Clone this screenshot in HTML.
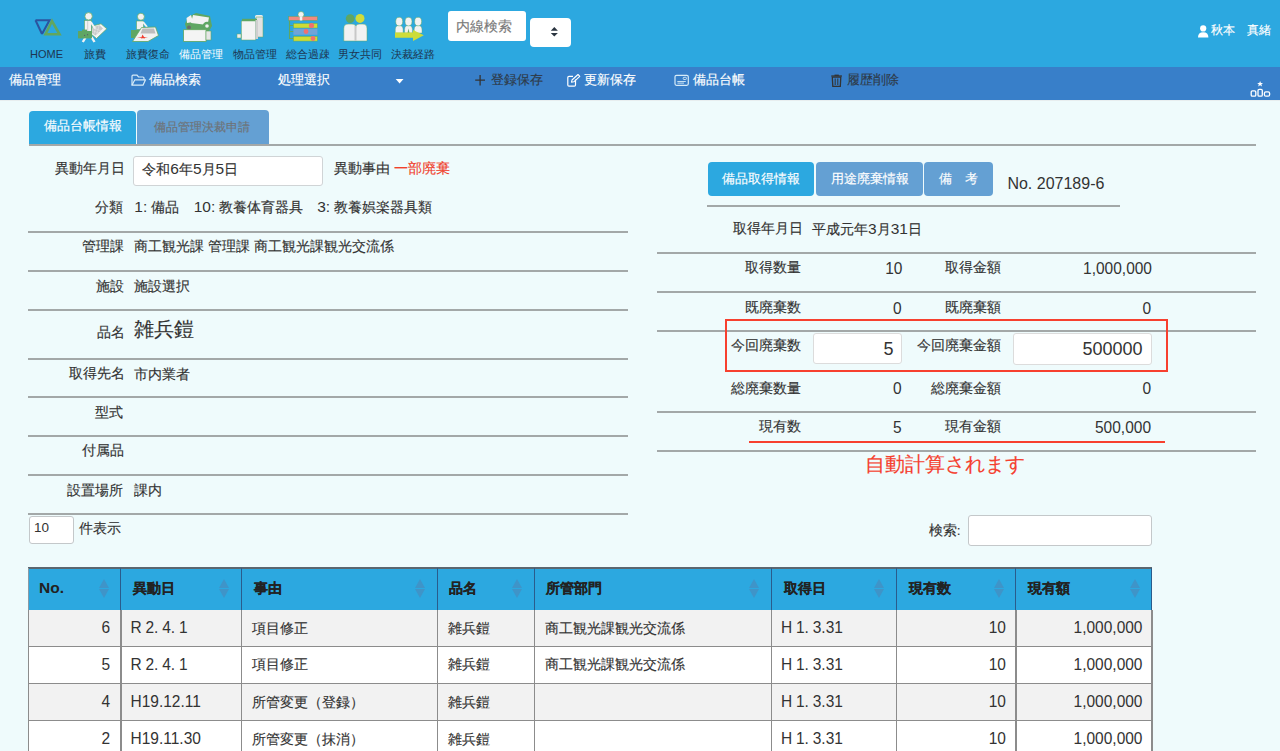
<!DOCTYPE html>
<html><head><meta charset="utf-8"><style>
*{margin:0;padding:0;box-sizing:border-box}
html,body{width:1280px;height:751px;overflow:hidden}
body{font-family:"Liberation Sans",sans-serif;background:#effbfc;color:#333;position:relative}
.a{position:absolute;white-space:nowrap}
.t{line-height:1}
.cj{-webkit-text-stroke:0.15px currentColor}
.cj .n{-webkit-text-stroke:0}
.n{font-size:1.107em}
#hdr{position:absolute;left:0;top:0;width:1280px;height:67px;background:#2ca8e0}
#nav{position:absolute;left:0;top:67px;width:1280px;height:33px;background:#387fc9}
.btn{position:absolute;border-radius:4px;color:#fff;font-size:12.5px;line-height:1;text-align:center}
.sort{width:11px;height:19px}
.sort:before,.sort:after{content:"";position:absolute;left:0;border-left:5.5px solid transparent;border-right:5.5px solid transparent}
.sort:before{top:0;border-bottom:9px solid #3f94c8}
.sort:after{top:10px;border-top:9px solid #3f94c8}
</style></head><body>
<div id="hdr"></div><div id="nav"></div><div class="a" style="left:0;top:100px;width:1280px;height:1px;background:#e8eeef"></div>
<div class="a" style="left:448px;top:11px;width:78px;height:30px;background:#fff;border-radius:3px"></div>
<div class="a" style="left:530px;top:17.5px;width:41px;height:29px;background:#fff;border-radius:4px"></div>
<svg class="a" style="left:0;top:0" width="480" height="50" viewBox="0 0 480 50">
<!-- HOME -->
<path d="M35.5 20.3 L49.5 20.3 L42 34" fill="none" stroke="#2b549f" stroke-width="2" stroke-linejoin="miter"/>
<path d="M35.5 20.3 L42 34" fill="none" stroke="#2b549f" stroke-width="2"/>
<path d="M52 21 L45.5 34.3 L59.5 34.3 Z" fill="none" stroke="#62a65e" stroke-width="2.6" stroke-linejoin="miter"/>
<!-- 旅費 -->
<path d="M92.5 26 L101 23.8 L106.8 28.8 L96.5 38.5 L91 34 Z" fill="#f4f4f4" stroke="#62a65e" stroke-width="0.7"/>
<path d="M93 27 L99.5 25.2 L103 28.5 L95.5 35.5 L92 33 Z" fill="#c9c9c9"/>
<path d="M94 28 L101 31 M93.5 31 L99.5 33.5 M96 26.5 L94 34 M99 26 L96.5 35" stroke="#e8e8e8" stroke-width="0.6"/>
<circle cx="88.6" cy="16.3" r="3.7" fill="#f2f2f2" stroke="#62a65e" stroke-width="0.7"/>
<rect x="84.5" y="20.5" width="6.8" height="11.5" fill="#f2f2f2" stroke="#62a65e" stroke-width="0.6"/>
<rect x="87.2" y="21" width="1" height="10" fill="#cfcfcf"/>
<path d="M90.8 22 L95 28.5" stroke="#f2f2f2" stroke-width="2"/>
<path d="M85.5 37.5 L82.8 42 M91.5 37 L94.5 42" stroke="#f2f2f2" stroke-width="2.4"/>
<rect x="78" y="31" width="14" height="7.4" fill="#5fa663"/>
<rect x="82" y="29.6" width="5" height="1.6" fill="#5fa663"/>
<circle cx="84.6" cy="35.4" r="0.6" fill="#5a5a6a"/><circle cx="87.6" cy="34.7" r="0.6" fill="#5a5a6a"/>
<!-- 旅費復命 -->
<circle cx="140.9" cy="16.7" r="3.5" fill="#f2f2f2" stroke="#62a65e" stroke-width="0.7"/>
<rect x="136.5" y="21" width="7" height="8.5" fill="#f2f2f2" stroke="#62a65e" stroke-width="0.6"/>
<path d="M143 22 L147 27" stroke="#f2f2f2" stroke-width="2"/>
<rect x="131" y="30" width="8" height="8" fill="#5fa663"/>
<path d="M141.5 27.5 L155.5 27 L158.5 35.5 L148 41.5 L132.5 41.5 Z" fill="#f2f2f2" stroke="#62a65e" stroke-width="0.8"/>
<path d="M142.5 28.5 L154 28.5 L155.5 33.5 L140.5 33.5 Z" fill="#bdbdbd"/>
<path d="M142.5 34.5 L145 38.5 L137 37 L148 37 L141 38.5 Z" fill="#f03c30"/>
<!-- 備品管理 -->
<path d="M188 17 L196 13 L210 16 L212 26 L209 31 L187 31 L185 24 Z" fill="#5fa663"/>
<path d="M193 15 L209 17.5 L207.5 25 L191 23 Z" fill="#f2f2f2"/>
<path d="M186.5 18 L191 15 L193 22 L187 23 Z" fill="#f2f2f2"/>
<circle cx="207" cy="26" r="4.2" fill="#5fa663"/><circle cx="207" cy="26" r="1.8" fill="#f2f2f2"/>
<circle cx="189" cy="27.5" r="2" fill="#6b6b6b"/>
<rect x="183.6" y="29.7" width="22.5" height="11.7" fill="#f4f4f4" stroke="#62a65e" stroke-width="0.8"/>
<rect x="206" y="31" width="5" height="9" fill="#e6e6e6" stroke="#62a65e" stroke-width="0.6"/>
<!-- 物品管理 -->
<rect x="255" y="15" width="8" height="3.5" rx="1.5" fill="#eeeeee"/>
<rect x="256" y="17" width="7" height="20" fill="#e2e2e2" stroke="#62a65e" stroke-width="0.5"/>
<rect x="242" y="18.8" width="15" height="2.4" fill="#5fa663"/>
<rect x="241.3" y="21" width="14.5" height="19" fill="#f4f4f4" stroke="#5fa663" stroke-width="0.5"/>
<rect x="255.5" y="20" width="2.5" height="19" fill="#cfcfcf"/>
<rect x="237" y="34" width="4" height="4" fill="#eeeeee" stroke="#5fa663" stroke-width="0.5"/>
<!-- 総合過疎 -->
<path d="M289.5 21 V39 M289.5 25.5 H293.5 M289.5 31.5 H293.5 M289.5 38.5 H293.5" stroke="#5fa663" stroke-width="1.1" fill="none"/>
<rect x="288.6" y="16.4" width="28.8" height="4" fill="#f08a80" stroke="#5fa663" stroke-width="0.5"/>
<circle cx="301" cy="14.5" r="3" fill="#f2f2f2" stroke="#5fa663" stroke-width="0.6"/>
<rect x="299.8" y="17" width="2.5" height="3.5" fill="#f2f2f2"/>
<rect x="293.4" y="23.4" width="24" height="4.6" fill="#cddc34" stroke="#5fa663" stroke-width="0.5"/>
<rect x="293.4" y="28.7" width="24" height="6.1" fill="#6fa4d8"/>
<rect x="293.4" y="36.3" width="24" height="4.8" fill="#cddc34" stroke="#5fa663" stroke-width="0.5"/>
<circle cx="311.5" cy="25.5" r="2.6" fill="#f07070"/>
<circle cx="306" cy="31.5" r="2.4" fill="#f07070"/>
<circle cx="313" cy="38.5" r="2.4" fill="#f07070"/>
<!-- 男女共同 -->
<path d="M343.8 41 V28.5 Q343.8 24.1 348 24.1 H352 Q356.2 24.1 356.2 28.5 V41 Z" fill="#f2f2f2" stroke="#5fa663" stroke-width="0.5"/>
<path d="M355.5 41 V28.5 Q355.5 24.1 359.5 24.1 H363 Q367 24.1 367 28.5 V41 Z" fill="#f2f2f2" stroke="#5fa663" stroke-width="0.5"/>
<rect x="354.5" y="26" width="2" height="15" fill="#c8c8c8"/>
<circle cx="350.2" cy="18.6" r="4.4" fill="#5fa663"/>
<circle cx="360" cy="18.4" r="4.5" fill="#d0dc3a"/>
<!-- 決裁経路 -->
<path d="M395.3 33 V29.5 Q395.3 25.4 399.2 25.4 Q403.1 25.4 403.1 29.8 V33 Z" fill="#f2f2f2" stroke="#5fa663" stroke-width="0.4"/>
<path d="M404.6 33 V29.5 Q404.6 25.4 408.5 25.4 Q412.4 25.4 412.4 29.8 V33 Z" fill="#f2f2f2" stroke="#5fa663" stroke-width="0.4"/>
<path d="M414.2 33 V29.5 Q414.2 25.4 418.1 25.4 Q422 25.4 422 29.8 V33 Z" fill="#f2f2f2" stroke="#5fa663" stroke-width="0.4"/>
<ellipse cx="399.2" cy="21.6" rx="3.5" ry="4.3" fill="#f2f2f2" stroke="#5fa663" stroke-width="0.5"/>
<ellipse cx="408.5" cy="21.6" rx="3.5" ry="4.3" fill="#f2f2f2" stroke="#5fa663" stroke-width="0.5"/>
<ellipse cx="418.1" cy="21.6" rx="3.5" ry="4.3" fill="#f2f2f2" stroke="#5fa663" stroke-width="0.5"/>
<path d="M407.5 33 L408.5 28.5 L409.5 33 Z" fill="#5fa663"/>
<path d="M395 32.5 H413 V30 L423.8 35.3 L413 41 V37.8 H395 Z" fill="#cddc3a"/>
</svg>
<svg class="a" style="left:0;top:0;z-index:5" width="1280" height="100" viewBox="0 0 1280 100">
<path d="M550.8 30.7 L554.3 26.9 L557.9 30.7 Z M550.8 32.9 L557.9 32.9 L554.3 36.6 Z" fill="#2b3540"/>
<circle cx="1203.2" cy="28.4" r="3.1" fill="#fff"/>
<path d="M1198 37.4 Q1198 32.2 1203.2 32.2 Q1208.4 32.2 1208.4 37.4 Z" fill="#fff"/>
<path d="M132 85.2 V76.3 Q132 75.2 133 75.2 H137 L138.5 77 H143 Q144 77 144 78 V79.8" fill="none" stroke="#d6ebf8" stroke-width="1.2"/>
<path d="M132 85.2 L134.8 79.8 H145.5 L143 85.2 Z" fill="none" stroke="#d6ebf8" stroke-width="1.2" stroke-linejoin="round"/>
<path d="M395.7 79.1 H403.5 L399.6 83.6 Z" fill="#fff"/>
<path d="M480.1 75 V85.5 M475.2 80.2 H485" stroke="#333" stroke-width="1.3"/>
<path d="M575.5 79.5 V85 Q575.5 86.2 574.3 86.2 H569 Q567.8 86.2 567.8 85 V77.5 Q567.8 76.3 569 76.3 H573" fill="none" stroke="#fff" stroke-width="1.2"/>
<path d="M571.5 82.2 L572 80 L578 74.5 L579.8 76.3 L573.8 81.8 Z" fill="none" stroke="#fff" stroke-width="1.1" stroke-linejoin="round"/>
<rect x="675" y="75.3" width="13.3" height="10" rx="1.5" fill="none" stroke="#d6ebf8" stroke-width="1.2"/>
<rect x="683.2" y="77.3" width="3.2" height="2.2" rx="0.8" fill="none" stroke="#d6ebf8" stroke-width="0.9"/>
<path d="M677.3 81.5 H685.8 M677.5 83.1 H684" stroke="#d6ebf8" stroke-width="0.9"/>
<path d="M831.3 76 H841.9" stroke="#333" stroke-width="1.3"/>
<path d="M834.5 75.3 H838.8" stroke="#333" stroke-width="1.4"/>
<path d="M832.3 77.2 H840.8 L840.3 86.3 H832.8 Z" fill="none" stroke="#333" stroke-width="1.3"/>
<path d="M835.2 78.5 V85 M837.8 78.5 V85" stroke="#333" stroke-width="1"/>
<path d="M1260.1 80.9 L1260.9 83 L1263.1 83 L1261.4 84.3 L1262 86.5 L1260.1 85.2 L1258.2 86.5 L1258.8 84.3 L1257.1 83 L1259.3 83 Z" fill="#fff"/>
<rect x="1251.2" y="90.8" width="4.6" height="5.4" rx="1.2" fill="none" stroke="#fff" stroke-width="1.3"/>
<rect x="1258" y="89.3" width="4.3" height="6.9" rx="1.2" fill="none" stroke="#fff" stroke-width="1.3"/>
<rect x="1264.4" y="91.8" width="5.2" height="4.4" rx="1.5" fill="none" stroke="#fff" stroke-width="1.3"/>
</svg>
<div class="a" style="left:29px;top:110.5px;width:107px;height:34.5px;background:#2ca8e0;border-radius:4px 4px 0 0"></div>
<div class="a" style="left:137px;top:110px;width:132px;height:35px;background:#64a0d3;border-radius:4px 4px 0 0"></div>
<div class="a" style="left:133px;top:155.5px;width:190px;height:30px;background:#fff;border:1px solid #d0d4d6;border-radius:3px"></div>
<div class="a" style="left:28.5px;top:515.7px;width:45.5px;height:28.5px;background:#fff;border:1px solid #c4c8ca;border-radius:3px"></div>
<div class="a" style="left:968px;top:515px;width:184px;height:30.5px;background:#fff;border:1px solid #c4c8ca;border-radius:3px"></div>
<div class="btn" style="left:708px;top:162px;width:106px;height:34px;background:#2ca8e0"></div>
<div class="btn" style="left:816px;top:162px;width:107px;height:34px;background:#64a0d3"></div>
<div class="btn" style="left:923.5px;top:162px;width:69.5px;height:34px;background:#64a0d3"></div>
<div class="a" style="left:29px;top:144px;width:1227px;height:2px;background:#a3a8a8"></div>
<div class="a" style="left:28px;top:231px;width:600px;height:2px;background:#a3a8a8"></div>
<div class="a" style="left:28px;top:270px;width:600px;height:2px;background:#a3a8a8"></div>
<div class="a" style="left:28px;top:309px;width:600px;height:2px;background:#a3a8a8"></div>
<div class="a" style="left:28px;top:358px;width:600px;height:2px;background:#a3a8a8"></div>
<div class="a" style="left:28px;top:396px;width:600px;height:2px;background:#a3a8a8"></div>
<div class="a" style="left:28px;top:435px;width:600px;height:2px;background:#a3a8a8"></div>
<div class="a" style="left:28px;top:474px;width:600px;height:2px;background:#a3a8a8"></div>
<div class="a" style="left:28px;top:513px;width:600px;height:2px;background:#a3a8a8"></div>
<div class="a" style="left:707px;top:205px;width:413px;height:2px;background:#a3a8a8"></div>
<div class="a" style="left:657px;top:252px;width:599px;height:2px;background:#a3a8a8"></div>
<div class="a" style="left:657px;top:291px;width:599px;height:2px;background:#a3a8a8"></div>
<div class="a" style="left:657px;top:330px;width:599px;height:2px;background:#a3a8a8"></div>
<div class="a" style="left:657px;top:411px;width:599px;height:2px;background:#a3a8a8"></div>
<div class="a" style="left:657px;top:450px;width:599px;height:2px;background:#a3a8a8"></div>
<div class="a" style="left:812.5px;top:333.4px;width:89px;height:31px;background:#fff;border:1px solid #dcdcdc;border-radius:3px"></div>
<div class="a" style="left:1012.5px;top:333.4px;width:139px;height:31.5px;background:#fff;border:1px solid #dcdcdc;border-radius:3px"></div>
<div class="a" style="left:724.8px;top:318.5px;width:443px;height:53.5px;border:2.2px solid #f7402f"></div>
<div class="a" style="left:749px;top:441.2px;width:416px;height:2px;background:#f7402f"></div>
<div class="a" style="left:28px;top:567px;width:1124px;height:43px;background:#2ca8e0;border-top:2px solid #5a6670"></div>
<div class="a" style="left:120.0px;top:568px;width:1.3px;height:42px;background:#2a5c8c"></div>
<div class="a sort" style="left:98.5px;top:579px"></div>
<div class="a" style="left:240.5px;top:568px;width:1.3px;height:42px;background:#2a5c8c"></div>
<div class="a sort" style="left:219px;top:579px"></div>
<div class="a" style="left:436.5px;top:568px;width:1.3px;height:42px;background:#2a5c8c"></div>
<div class="a sort" style="left:415px;top:579px"></div>
<div class="a" style="left:533.5px;top:568px;width:1.3px;height:42px;background:#2a5c8c"></div>
<div class="a sort" style="left:512px;top:579px"></div>
<div class="a" style="left:770.5px;top:568px;width:1.3px;height:42px;background:#2a5c8c"></div>
<div class="a sort" style="left:749px;top:579px"></div>
<div class="a" style="left:895.5px;top:568px;width:1.3px;height:42px;background:#2a5c8c"></div>
<div class="a sort" style="left:874px;top:579px"></div>
<div class="a" style="left:1015.0px;top:568px;width:1.3px;height:42px;background:#2a5c8c"></div>
<div class="a sort" style="left:993.5px;top:579px"></div>
<div class="a sort" style="left:1130px;top:579px"></div>
<div class="a" style="left:28px;top:568px;width:1.3px;height:42px;background:#8a9aa5"></div>
<div class="a" style="left:1151px;top:568px;width:1.3px;height:42px;background:#2a5c8c"></div>
<div class="a" style="left:28px;top:610px;width:1124px;height:36.9px;background:#f2f2f2"></div>
<div class="a" style="left:28px;top:645.85px;width:1124px;height:1.5px;background:#8c8c8c"></div>
<div class="a" style="left:28px;top:646.85px;width:1124px;height:36.9px;background:#fff"></div>
<div class="a" style="left:28px;top:682.75px;width:1124px;height:1.5px;background:#8c8c8c"></div>
<div class="a" style="left:28px;top:683.75px;width:1124px;height:36.8px;background:#f2f2f2"></div>
<div class="a" style="left:28px;top:719.55px;width:1124px;height:1.5px;background:#8c8c8c"></div>
<div class="a" style="left:28px;top:720.55px;width:1124px;height:36.9px;background:#fff"></div>
<div class="a" style="left:28px;top:756.4px;width:1124px;height:1.5px;background:#8c8c8c"></div>
<div class="a" style="left:27.5px;top:610px;width:1.5px;height:141px;background:#8c8c8c"></div>
<div class="a" style="left:120.0px;top:610px;width:1.5px;height:141px;background:#8c8c8c"></div>
<div class="a" style="left:240.5px;top:610px;width:1.5px;height:141px;background:#8c8c8c"></div>
<div class="a" style="left:436.5px;top:610px;width:1.5px;height:141px;background:#8c8c8c"></div>
<div class="a" style="left:533.5px;top:610px;width:1.5px;height:141px;background:#8c8c8c"></div>
<div class="a" style="left:770.5px;top:610px;width:1.5px;height:141px;background:#8c8c8c"></div>
<div class="a" style="left:895.5px;top:610px;width:1.5px;height:141px;background:#8c8c8c"></div>
<div class="a" style="left:1015.0px;top:610px;width:1.5px;height:141px;background:#8c8c8c"></div>
<div class="a" style="left:1151px;top:610px;width:1.5px;height:141px;background:#8c8c8c"></div>
<div class="a t" id="h1" style="font-size:11px;color:#1d3550;top:48.88px;left:30.00px;">HOME</div>
<div class="a t" id="h2" style="font-size:11px;color:#1d3550;top:48.74px;left:84.00px;">旅費</div>
<div class="a t" id="h3" style="font-size:11px;color:#1d3550;top:48.74px;left:126.00px;">旅費復命</div>
<div class="a t" id="h4" style="font-size:11px;color:#fff;top:48.74px;left:179.00px;">備品管理</div>
<div class="a t" id="h5" style="font-size:11px;color:#1d3550;top:48.74px;left:233.00px;">物品管理</div>
<div class="a t" id="h6" style="font-size:11px;color:#1d3550;top:48.74px;left:286.00px;">総合過疎</div>
<div class="a t" id="h7" style="font-size:11px;color:#1d3550;top:48.74px;left:338.00px;">男女共同</div>
<div class="a t" id="h8" style="font-size:11px;color:#1d3550;top:48.74px;left:391.00px;">決裁経路</div>
<div class="a t cj" id="srch" style="font-size:13.5px;color:#7a7a7a;top:19.83px;left:456.00px;">内線検索</div>
<div class="a t cj" id="user" style="font-size:12px;color:#fff;top:24.14px;left:1211.00px;">秋本　真緒</div>
<div class="a t cj" id="n1" style="font-size:12.5px;color:#fff;top:74.41px;left:8.80px;">備品管理</div>
<div class="a t cj" id="n2" style="font-size:12.5px;color:#fff;top:74.41px;left:149.00px;">備品検索</div>
<div class="a t cj" id="n3" style="font-size:12.5px;color:#fff;top:74.41px;left:277.70px;">処理選択</div>
<div class="a t cj" id="n4" style="font-size:12.5px;color:#2e3a48;top:74.41px;left:491.00px;">登録保存</div>
<div class="a t cj" id="n5" style="font-size:12.5px;color:#fff;top:74.41px;left:584.00px;">更新保存</div>
<div class="a t cj" id="n6" style="font-size:12.5px;color:#fff;top:74.41px;left:692.50px;">備品台帳</div>
<div class="a t cj" id="n7" style="font-size:12.5px;color:#2e3a48;top:74.41px;left:847.00px;">履歴削除</div>
<div class="a t cj" id="t1" style="font-size:12.5px;color:#fff;top:120.42px;left:44.00px;">備品台帳情報</div>
<div class="a t cj" id="t2" style="font-size:12.2px;color:#6e7378;top:121.04px;left:153.50px;">備品管理決裁申請</div>
<div class="a t cj" id="l1" style="font-size:14px;color:#333;top:160.65px;right:1155.50px;">異動年月日</div>
<div class="a t cj" id="v1" style="font-size:14px;color:#333;top:161.25px;left:142.30px;">令和<span class="n">6</span>年<span class="n">5</span>月<span class="n">5</span>日</div>
<div class="a t cj" id="l1b" style="font-size:14px;color:#333;top:160.65px;left:334.00px;">異動事由</div>
<div class="a t cj" id="l1c" style="font-size:14px;color:#f0412c;top:160.65px;left:393.50px;">一部廃棄</div>
<div class="a t cj" id="l2" style="font-size:14px;color:#333;top:199.75px;right:1157.50px;">分類</div>
<div class="a t cj" id="v2a" style="font-size:14px;color:#333;top:198.95px;left:134.30px;"><span class="n">1:</span> 備品</div>
<div class="a t cj" id="v2b" style="font-size:14px;color:#333;top:198.95px;left:193.70px;"><span class="n">10:</span> 教養体育器具</div>
<div class="a t cj" id="v2c" style="font-size:14px;color:#333;top:198.95px;left:317.20px;"><span class="n">3:</span> 教養娯楽器具類</div>
<div class="a t cj" id="l3" style="font-size:14px;color:#333;top:238.95px;right:1156.50px;">管理課</div>
<div class="a t cj" id="v3" style="font-size:14px;color:#333;top:238.95px;left:134.00px;">商工観光課 管理課 商工観光課観光交流係</div>
<div class="a t cj" id="l4" style="font-size:14px;color:#333;top:279.45px;right:1156.50px;">施設</div>
<div class="a t cj" id="v4" style="font-size:14px;color:#333;top:279.45px;left:134.00px;">施設選択</div>
<div class="a t cj" id="l5" style="font-size:14px;color:#333;top:324.85px;right:1155.50px;">品名</div>
<div class="a t cj" id="v5" style="font-size:20px;color:#333;top:318.50px;left:134.00px;">雑兵鎧</div>
<div class="a t cj" id="l6" style="font-size:14px;color:#333;top:366.35px;right:1155.50px;">取得先名</div>
<div class="a t cj" id="v6" style="font-size:14px;color:#333;top:366.95px;left:134.00px;">市内業者</div>
<div class="a t cj" id="l7" style="font-size:14px;color:#333;top:404.95px;right:1157.50px;">型式</div>
<div class="a t cj" id="l8" style="font-size:14px;color:#333;top:442.75px;right:1156.50px;">付属品</div>
<div class="a t cj" id="l9" style="font-size:14px;color:#333;top:482.65px;right:1157.50px;">設置場所</div>
<div class="a t cj" id="v9" style="font-size:14px;color:#333;top:482.65px;left:134.00px;">課内</div>
<div class="a t" id="sel10" style="font-size:13.5px;color:#333;top:521.38px;left:33.90px;">10</div>
<div class="a t cj" id="kensu" style="font-size:14px;color:#333;top:520.95px;left:79.20px;">件表示</div>

<div class="a t" id="no" style="font-size:16px;color:#333;top:176.08px;left:1007.40px;">No. 207189-6</div>
<div class="a t cj" id="r0" style="font-size:14px;color:#333;top:220.70px;left:733.00px;">取得年月日</div>
<div class="a t cj" id="r0v" style="font-size:14px;color:#333;top:220.70px;left:812.00px;">平成元年<span class="n">3</span>月<span class="n">31</span>日</div>
<div class="a t cj" id="ra0" style="font-size:14px;color:#333;top:259.50px;right:478.60px;">取得数量</div>
<div class="a t cj" id="rc0" style="font-size:14px;color:#333;top:259.50px;right:279.00px;">取得金額</div>
<div class="a t" id="rb0" style="font-size:15.5px;color:#333;top:259.94px;right:377.50px;transform:scaleY(1.1);transform-origin:0 0;">10</div>
<div class="a t" id="rd0" style="font-size:15.5px;color:#333;top:259.94px;right:128.00px;transform:scaleY(1.1);transform-origin:0 0;">1,000,000</div>
<div class="a t cj" id="ra1" style="font-size:14px;color:#333;top:299.95px;right:478.60px;">既廃棄数</div>
<div class="a t cj" id="rc1" style="font-size:14px;color:#333;top:299.95px;right:279.00px;">既廃棄額</div>
<div class="a t" id="rb1" style="font-size:15.5px;color:#333;top:299.64px;right:378.50px;transform:scaleY(1.1);transform-origin:0 0;">0</div>
<div class="a t" id="rd1" style="font-size:15.5px;color:#333;top:299.64px;right:129.00px;transform:scaleY(1.1);transform-origin:0 0;">0</div>
<div class="a t cj" id="ra2" style="font-size:14px;color:#333;top:337.95px;right:478.60px;">今回廃棄数</div>
<div class="a t cj" id="rc2" style="font-size:14px;color:#333;top:337.95px;right:279.00px;">今回廃棄金額</div>
<div class="a t cj" id="ra3" style="font-size:14px;color:#333;top:380.75px;right:478.60px;">総廃棄数量</div>
<div class="a t cj" id="rc3" style="font-size:14px;color:#333;top:380.75px;right:279.00px;">総廃棄金額</div>
<div class="a t" id="rb3" style="font-size:15.5px;color:#333;top:380.44px;right:378.50px;transform:scaleY(1.1);transform-origin:0 0;">0</div>
<div class="a t" id="rd3" style="font-size:15.5px;color:#333;top:380.44px;right:129.00px;transform:scaleY(1.1);transform-origin:0 0;">0</div>
<div class="a t cj" id="ra4" style="font-size:14px;color:#333;top:418.90px;right:478.60px;">現有数</div>
<div class="a t cj" id="rc4" style="font-size:14px;color:#333;top:418.90px;right:279.00px;">現有金額</div>
<div class="a t" id="rb4" style="font-size:15.5px;color:#333;top:419.34px;right:378.50px;transform:scaleY(1.1);transform-origin:0 0;">5</div>
<div class="a t" id="rd4" style="font-size:15.5px;color:#333;top:419.34px;right:129.00px;transform:scaleY(1.1);transform-origin:0 0;">500,000</div>
<div class="a t cj" id="auto" style="font-size:20px;color:#f5402f;top:453.50px;left:864.70px;">自動計算されます</div>
<div class="a t cj" id="kensaku" style="font-size:13.5px;color:#333;top:524.24px;left:928.70px;">検索:</div>
<div class="a t" id="in5" style="font-size:18px;color:#333;top:339.54px;right:386.50px;">5</div>
<div class="a t" id="in500" style="font-size:18px;color:#333;top:339.54px;right:137.50px;">500000</div>
<div class="a t" id="th0" style="font-size:15.5px;color:#222;top:579.54px;font-weight:bold;left:39.00px;">No.</div>
<div class="a t cj" id="th1" style="font-size:14px;color:#222;top:581.35px;font-weight:bold;left:133.00px;">異動日</div>
<div class="a t cj" id="th2" style="font-size:14px;color:#222;top:581.35px;font-weight:bold;left:254.00px;">事由</div>
<div class="a t cj" id="th3" style="font-size:14px;color:#222;top:581.35px;font-weight:bold;left:449.00px;">品名</div>
<div class="a t cj" id="th4" style="font-size:14px;color:#222;top:581.35px;font-weight:bold;left:546.00px;">所管部門</div>
<div class="a t cj" id="th5" style="font-size:14px;color:#222;top:581.35px;font-weight:bold;left:784.00px;">取得日</div>
<div class="a t cj" id="th6" style="font-size:14px;color:#222;top:581.35px;font-weight:bold;left:909.00px;">現有数</div>
<div class="a t cj" id="th7" style="font-size:14px;color:#222;top:581.35px;font-weight:bold;left:1028.00px;">現有額</div>
<div class="a t" id="td0_0" style="font-size:15.5px;color:#333;top:619.44px;right:1170.00px;transform:scaleY(1.1);transform-origin:0 0;">6</div>
<div class="a t" id="td0_1" style="font-size:15.5px;color:#333;top:619.44px;left:130.50px;word-spacing:-0.5px;transform:scaleY(1.1);transform-origin:0 0;">R 2. 4. 1</div>
<div class="a t cj" id="td0_2" style="font-size:14px;color:#333;top:620.85px;left:252.00px;">項目修正</div>
<div class="a t cj" id="td0_3" style="font-size:14px;color:#333;top:620.85px;left:448.00px;">雑兵鎧</div>
<div class="a t cj" id="td0_4" style="font-size:14px;color:#333;top:620.85px;left:545.00px;">商工観光課観光交流係</div>
<div class="a t" id="td0_5" style="font-size:15.5px;color:#333;top:619.44px;left:781.00px;word-spacing:-0.5px;transform:scaleY(1.1);transform-origin:0 0;">H 1. 3.31</div>
<div class="a t" id="td0_6" style="font-size:15.5px;color:#333;top:619.44px;right:274.00px;transform:scaleY(1.1);transform-origin:0 0;">10</div>
<div class="a t" id="td0_7" style="font-size:15.5px;color:#333;top:619.44px;right:137.50px;transform:scaleY(1.1);transform-origin:0 0;">1,000,000</div>
<div class="a t" id="td1_0" style="font-size:15.5px;color:#333;top:656.04px;right:1170.00px;transform:scaleY(1.1);transform-origin:0 0;">5</div>
<div class="a t" id="td1_1" style="font-size:15.5px;color:#333;top:656.04px;left:130.50px;word-spacing:-0.5px;transform:scaleY(1.1);transform-origin:0 0;">R 2. 4. 1</div>
<div class="a t cj" id="td1_2" style="font-size:14px;color:#333;top:657.45px;left:252.00px;">項目修正</div>
<div class="a t cj" id="td1_3" style="font-size:14px;color:#333;top:657.45px;left:448.00px;">雑兵鎧</div>
<div class="a t cj" id="td1_4" style="font-size:14px;color:#333;top:657.45px;left:545.00px;">商工観光課観光交流係</div>
<div class="a t" id="td1_5" style="font-size:15.5px;color:#333;top:656.04px;left:781.00px;word-spacing:-0.5px;transform:scaleY(1.1);transform-origin:0 0;">H 1. 3.31</div>
<div class="a t" id="td1_6" style="font-size:15.5px;color:#333;top:656.04px;right:274.00px;transform:scaleY(1.1);transform-origin:0 0;">10</div>
<div class="a t" id="td1_7" style="font-size:15.5px;color:#333;top:656.04px;right:137.50px;transform:scaleY(1.1);transform-origin:0 0;">1,000,000</div>
<div class="a t" id="td2_0" style="font-size:15.5px;color:#333;top:693.44px;right:1170.00px;transform:scaleY(1.1);transform-origin:0 0;">4</div>
<div class="a t" id="td2_1" style="font-size:15.5px;color:#333;top:693.44px;left:130.50px;transform:scaleY(1.1);transform-origin:0 0;">H19.12.11</div>
<div class="a t cj" id="td2_2" style="font-size:14px;color:#333;top:694.85px;left:252.00px;">所管変更（登録）</div>
<div class="a t cj" id="td2_3" style="font-size:14px;color:#333;top:694.85px;left:448.00px;">雑兵鎧</div>
<div class="a t" id="td2_5" style="font-size:15.5px;color:#333;top:693.44px;left:781.00px;word-spacing:-0.5px;transform:scaleY(1.1);transform-origin:0 0;">H 1. 3.31</div>
<div class="a t" id="td2_6" style="font-size:15.5px;color:#333;top:693.44px;right:274.00px;transform:scaleY(1.1);transform-origin:0 0;">10</div>
<div class="a t" id="td2_7" style="font-size:15.5px;color:#333;top:693.44px;right:137.50px;transform:scaleY(1.1);transform-origin:0 0;">1,000,000</div>
<div class="a t" id="td3_0" style="font-size:15.5px;color:#333;top:730.24px;right:1170.00px;transform:scaleY(1.1);transform-origin:0 0;">2</div>
<div class="a t" id="td3_1" style="font-size:15.5px;color:#333;top:730.24px;left:130.50px;transform:scaleY(1.1);transform-origin:0 0;">H19.11.30</div>
<div class="a t cj" id="td3_2" style="font-size:14px;color:#333;top:731.65px;left:252.00px;">所管変更（抹消）</div>
<div class="a t cj" id="td3_3" style="font-size:14px;color:#333;top:731.65px;left:448.00px;">雑兵鎧</div>
<div class="a t" id="td3_5" style="font-size:15.5px;color:#333;top:730.24px;left:781.00px;word-spacing:-0.5px;transform:scaleY(1.1);transform-origin:0 0;">H 1. 3.31</div>
<div class="a t" id="td3_6" style="font-size:15.5px;color:#333;top:730.24px;right:274.00px;transform:scaleY(1.1);transform-origin:0 0;">10</div>
<div class="a t" id="td3_7" style="font-size:15.5px;color:#333;top:730.24px;right:137.50px;transform:scaleY(1.1);transform-origin:0 0;">1,000,000</div>
<div class="a t cj" style="left:708px;width:106px;top:173.2px;font-size:12.5px;color:#fff;text-align:center">備品取得情報</div>
<div class="a t cj" style="left:816px;width:107px;top:173.2px;font-size:12.5px;color:#fff;text-align:center">用途廃棄情報</div>
<div class="a t cj" style="left:923.5px;width:69.5px;top:173.2px;font-size:12.5px;color:#fff;text-align:center">備　考</div>
</body></html>
